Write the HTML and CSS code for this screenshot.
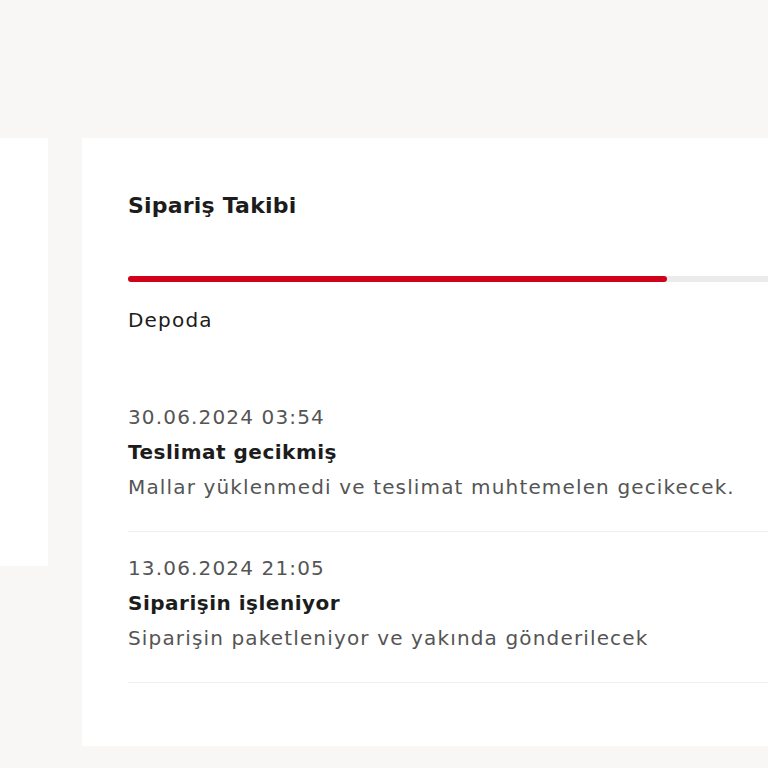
FILE: index.html
```html
<!DOCTYPE html>
<html lang="tr">
<head>
  <meta charset="UTF-8">
  <title>Sipariş Takibi</title>
  <link rel="stylesheet" href="styles.css">
</head>
<body>
  <div class="page">
    <div class="side-panel"></div>

    <div class="tracking-card">
      <h2 class="card-title">Sipariş Takibi</h2>

      <div class="progress">
        <div class="progress-fill"></div>
      </div>
      <div class="progress-label">Depoda</div>

      <div class="events">
        <div class="event">
          <div class="event-date">30.06.2024 03:54</div>
          <div class="event-title">Teslimat gecikmiş</div>
          <div class="event-text">Mallar yüklenmedi ve teslimat muhtemelen gecikecek.</div>
        </div>
        <div class="event">
          <div class="event-date">13.06.2024 21:05</div>
          <div class="event-title">Siparişin işleniyor</div>
          <div class="event-text">Siparişin paketleniyor ve yakında gönderilecek</div>
        </div>
      </div>
    </div>
  </div>
</body>
</html>
```

FILE: styles.css
```css
html, body {
  margin: 0;
  height: 100%;
}

body {
  font-family: 'DejaVu Sans', 'Noto Sans', sans-serif;
  background-color: #f8f7f5;
  color: #1c1c1c;
}

.page {
  display: flex;
  align-items: flex-start;
  gap: 34px;
  padding-top: 138px;
}

.side-panel {
  flex: 0 0 48px;
  height: 428px;
  background-color: #fff;
}

.tracking-card {
  flex: 1;
  box-sizing: border-box;
  height: 608px;
  padding: 51px 0 0 46px;
  background-color: #fff;
}

.card-title {
  margin: 0;
  font-size: 22px;
  line-height: 34px;
  font-weight: 700;
  letter-spacing: 0.2px;
}

.progress {
  margin-top: 53px;
  height: 6px;
  border-radius: 3px 0 0 3px;
  background-color: #ebebeb;
}

.progress-fill {
  width: 539px;
  height: 100%;
  border-radius: 3px;
  background-color: #d0021b;
}

.progress-label {
  margin-top: 23px;
  font-size: 20px;
  line-height: 30px;
  letter-spacing: 1.2px;
}

.events {
  margin-top: 51px;
}

.event {
  padding: 14px 0 26px;
  border-bottom: 1px solid #efefef;
  font-size: 20px;
  line-height: 35px;
  letter-spacing: 1.15px;
}

.event + .event {
  padding-top: 19px;
}

.event-date,
.event-text {
  color: #555;
}

.event-title {
  font-weight: 700;
  color: #1c1c1c;
  letter-spacing: 0.5px;
}
```
